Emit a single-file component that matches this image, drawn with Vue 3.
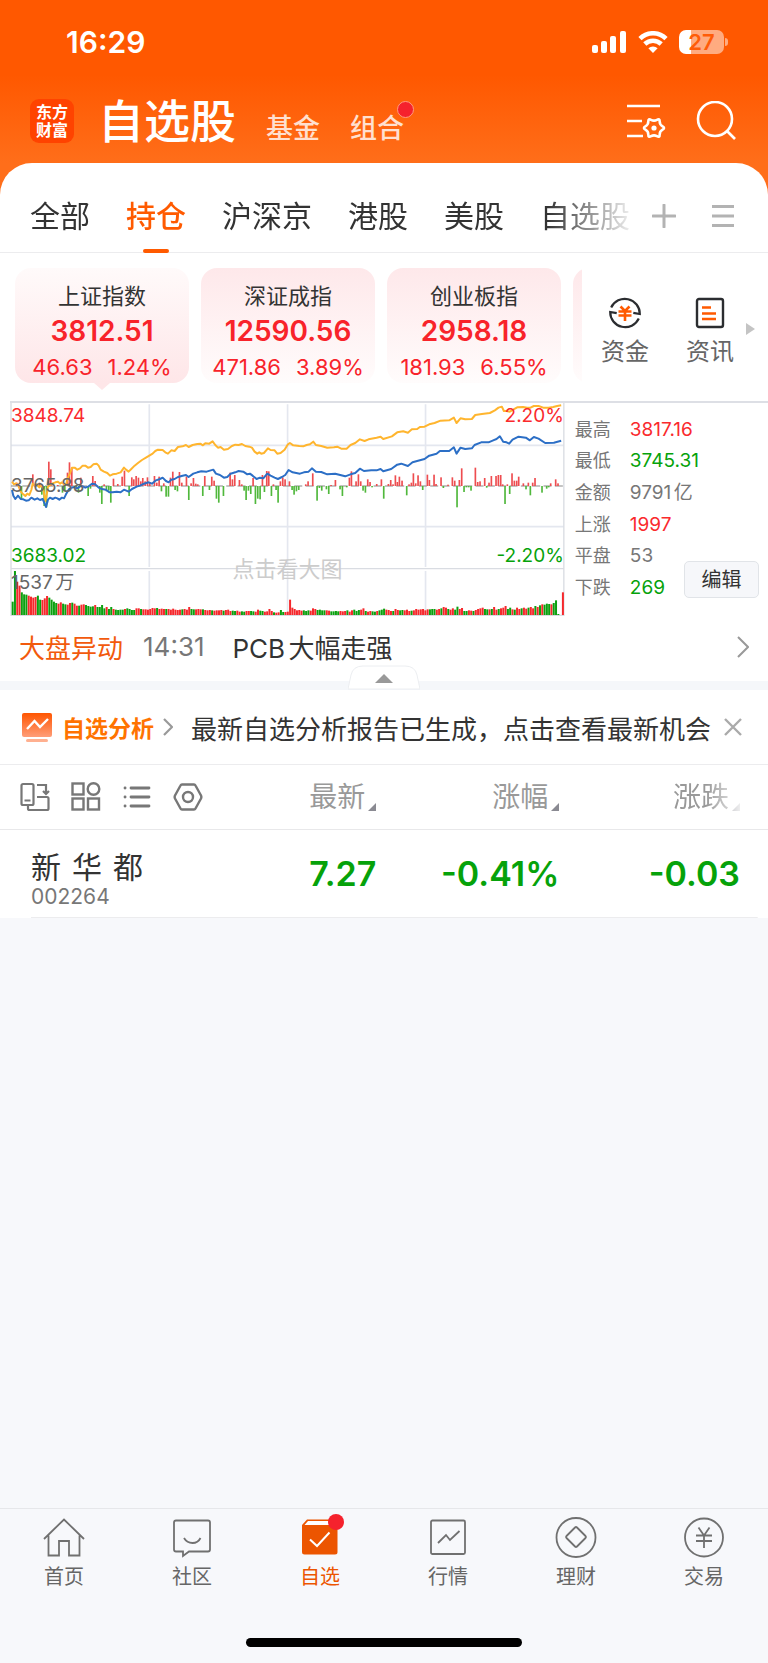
<script setup>
    import { ref, computed } from 'vue';

    const tabs = ['全部', '持仓', '沪深京', '港股', '美股', '自选股'];
    const activeTab = ref('持仓');

    const indexes = [
        { name: '上证指数', price: '3812.51', change: '46.63', percent: '1.24%' },
        { name: '深证成指', price: '12590.56', change: '471.86', percent: '3.89%' },
        { name: '创业板指', price: '2958.18', change: '181.93', percent: '6.55%' },
    ];
    const activeIndex = ref('上证指数');

    const stats = [
        { label: '最高', value: '3817.16', trend: 'up' },
        { label: '最低', value: '3745.31', trend: 'down' },
        { label: '金额', value: '9791亿', trend: 'flat' },
        { label: '上涨', value: '1997', trend: 'up' },
        { label: '平盘', value: '53', trend: 'flat' },
        { label: '下跌', value: '269', trend: 'down' },
    ];

    const columns = ['最新', '涨幅', '涨跌'];
    const stocks = [
        { name: '新 华 都', code: '002264', values: ['7.27', '-0.41%', '-0.03'] },
    ];

    const bannerVisible = ref(true);
    const activeNav = ref('自选');

    // minute chart, three units to a pixel
    const BASE = 273;
    const FLOOR = 660;
    const STEP = 6.88;

    const leadLine = '36,260 42,268 48,265 55,272 62,290 70,298 76,303 82,296 88,300 94,285 98,266 104,272 110,268 118,277 124,270 130,282 136,318 140,300 144,275 150,270 158,265 166,262 174,260 180,266 186,262 192,268 198,270 203,250 210,235 216,218 224,218 232,224 240,220 248,212 256,212 264,218 272,216 280,208 290,206 296,212 302,224 312,230 322,234 330,242 338,238 350,236 362,232 372,218 378,224 386,230 394,222 404,212 414,204 426,195 438,188 448,182 458,176 466,168 474,164 488,165 496,172 504,176 514,166 524,168 534,156 548,154 558,150 566,156 578,150 592,147 602,146 608,151 616,145 628,146 638,139 646,150 654,158 662,156 672,164 684,162 696,153 706,149 716,150 726,147 736,153 748,155 756,158 764,170 772,176 778,172 784,176 792,174 804,160 812,165 824,166 832,176 842,174 854,164 864,148 870,144 880,151 898,153 910,154 920,150 930,148 940,140 948,150 964,153 982,158 1002,157 1012,155 1024,161 1040,161 1052,150 1066,144 1080,133 1094,138 1106,133 1130,128 1142,125 1150,132 1176,124 1192,112 1210,109 1224,113 1236,103 1252,102 1260,96 1274,95 1288,88 1304,84 1322,77 1348,76 1362,68 1370,84 1382,70 1396,73 1416,72 1426,60 1446,57 1470,54 1485,46 1496,38 1506,35 1512,48 1520,48 1530,50 1540,44 1552,37 1570,36 1582,38 1592,38 1602,33 1616,33 1630,38 1646,38 1660,36 1672,33 1684,31';
    const indexLine = '36,285 40,302 46,312 54,302 62,312 70,313 78,317 86,316 94,308 104,314 112,310 120,315 128,312 134,326 138,336 144,314 150,308 158,312 166,308 172,310 178,314 186,308 192,310 198,298 206,284 214,278 224,276 232,280 240,274 248,274 256,278 266,274 276,266 286,268 296,278 306,282 318,284 328,292 338,292 350,290 362,292 372,284 386,290 396,282 410,275 420,272 432,266 446,262 456,266 468,256 480,252 488,248 498,258 506,262 514,254 524,252 534,246 548,242 558,240 566,246 580,236 592,232 604,229 620,230 640,224 648,236 660,240 672,248 682,246 692,236 706,232 716,228 730,230 742,238 750,236 758,242 770,252 780,248 790,250 802,236 812,242 824,248 834,252 846,246 856,240 866,225 878,232 900,236 912,232 926,230 936,220 948,230 964,231 982,238 1006,236 1036,244 1052,238 1066,234 1080,221 1092,228 1114,226 1130,226 1142,222 1150,229 1174,222 1192,209 1204,206 1224,213 1238,202 1260,196 1274,192 1288,182 1310,176 1320,168 1348,168 1362,157 1370,176 1382,158 1396,162 1416,160 1424,150 1444,142 1466,142 1480,136 1490,132 1500,124 1510,140 1520,142 1528,146 1538,134 1556,125 1578,128 1590,136 1602,126 1616,131 1636,144 1662,143 1684,137';

    // [x, height], positive is above the base line
    const momentum = [
        [50, 10], [64, -40], [98, 35], [118, 10], [125, -26], [132, -60], [139, -64], [146, 73], [152, 50],
        [173, 3], [187, -20], [194, -12], [202, 40], [208, 71], [215, 55], [228, -10], [235, -20], [242, 25],
        [264, -30], [271, -8], [278, 30], [285, 15], [299, -20], [305, -54], [312, 5], [319, -16], [326, -14],
        [332, -50], [340, 22], [353, 6], [366, 28], [373, 46], [387, -30], [395, 26], [401, 20], [408, 30],
        [415, 25], [422, 14], [428, 24], [435, 14], [442, 26], [449, 12], [463, 30], [470, 10], [477, 28],
        [484, -16], [491, 8], [498, -32], [505, -32], [511, 25], [518, 43], [525, -12], [532, -16], [538, 42],
        [545, 10], [559, 28], [566, -42], [573, 8], [580, 24], [587, 7], [593, 5], [608, -30], [614, 30],
        [628, -12], [635, 28], [642, 16], [649, -38], [656, -50], [670, -30], [690, 40], [697, 20], [704, 33],
        [718, 18], [725, 5], [732, -14], [738, -42], [745, -14], [752, -24], [759, 24], [766, -54], [773, -38],
        [780, -40], [787, 33], [793, -18], [800, 45], [806, 44], [814, -30], [820, 5], [828, -12], [834, -50],
        [841, 14], [848, 26], [855, 20], [868, 14], [876, -12], [882, -26], [889, -16], [896, -12], [917, 5],
        [924, 14], [938, 38], [951, -44], [958, -6], [965, -14], [979, -10], [986, -24], [993, 3], [1006, 18],
        [1020, -10], [1027, -30], [1040, -4], [1048, 25], [1054, 44], [1068, 14], [1075, 35], [1082, 14],
        [1089, -14], [1096, -20], [1103, 20], [1110, 12], [1116, -4], [1130, 6], [1144, 20], [1151, -38],
        [1165, 6], [1172, 18], [1179, 5], [1186, 32], [1192, 12], [1198, 28], [1206, 16], [1220, -28],
        [1227, 5], [1234, 10], [1240, 38], [1247, 8], [1254, 32], [1261, 14], [1268, -12], [1282, 34],
        [1288, 18], [1302, 34], [1308, 6], [1323, 26], [1330, -6], [1344, 4], [1357, 26], [1364, 16],
        [1371, -64], [1378, 18], [1385, 53], [1392, -18], [1399, -4], [1406, -4], [1413, -14], [1426, 55],
        [1433, 12], [1440, 14], [1454, 24], [1460, -5], [1467, 10], [1474, 30], [1488, 30], [1495, 33],
        [1502, 33], [1508, 5], [1515, -54], [1522, 5], [1529, -24], [1536, 38], [1543, 16], [1550, 16],
        [1556, 28], [1570, 8], [1578, -10], [1585, 10], [1591, -28], [1598, 10], [1605, 24], [1626, -20],
        [1640, -8], [1646, -4], [1652, 8], [1667, 20], [1674, 8],
    ];

    const volumes = [
        40, 132, 100, 88, 68, 62, 61, 58, 55, 52, 54, 58, 46, 45, 50, 57, 52, 46, 40, 36,
        34, 38, 34, 32, 31, 36, 37, 34, 28, 28, 31, 32, 30, 27, 25, 26, 30, 24, 24, 30,
        20, 24, 18, 24, 18, 16, 15, 16, 16, 18, 20, 18, 15, 15, 20, 20, 18, 17, 17, 16,
        18, 21, 20, 21, 18, 19, 18, 18, 18, 16, 19, 16, 15, 16, 17, 18, 16, 24, 18, 17,
        17, 18, 17, 17, 15, 14, 15, 14, 13, 14, 14, 15, 13, 15, 16, 12, 13, 12, 13, 10,
        11, 10, 12, 12, 12, 11, 10, 16, 13, 12, 10, 11, 18, 12, 8, 7, 8, 15, 9, 9,
        10, 46, 22, 18, 14, 15, 13, 14, 12, 14, 13, 20, 18, 15, 16, 14, 14, 14, 13, 11,
        11, 12, 11, 12, 11, 12, 14, 10, 14, 16, 12, 15, 16, 20, 12, 10, 12, 11, 10, 12,
        14, 16, 19, 16, 15, 12, 12, 18, 15, 14, 15, 14, 16, 12, 13, 14, 18, 16, 17, 18,
        14, 17, 17, 18, 18, 16, 18, 20, 24, 22, 18, 16, 20, 16, 25, 18, 21, 12, 12, 14,
        13, 12, 15, 18, 20, 22, 18, 17, 17, 18, 24, 16, 18, 20, 22, 27, 18, 22, 17, 16,
        22, 18, 20, 22, 19, 22, 24, 20, 27, 24, 29, 32, 31, 34, 33, 32, 36, 44, 3, 0, 68,
    ];
    const reds = '001100011110011100001100110110110000100001001000010000110111111011101111110111001110111011110111001100110011001111011001101111100011100001100001110110001101100100011101100111011111110001101101100110011011110010110111001011011011010100010001';

    const volumeBars = computed(() => volumes.map((height, i) => ({
        x: 35 + i * STEP,
        height,
        up: i === volumes.length - 1 || i === 121 || reds[i] === '1',
    })));
</script>

<template>
    <div class="page">
        <header class="top">
            <div class="status">
                <span class="clock">16:29</span>
                <div class="status-icons">
                    <svg width="35" height="22" viewBox="0 0 35 22" fill="#fff">
                        <rect x="0" y="14" width="6" height="8" rx="2" />
                        <rect x="9" y="10" width="6" height="12" rx="2" />
                        <rect x="18" y="5" width="6" height="17" rx="2" />
                        <rect x="28" y="0" width="6" height="22" rx="2" />
                    </svg>
                    <svg width="30" height="22" viewBox="0 0 30 22" fill="none" stroke="#fff" stroke-width="4.6">
                        <path d="M2 7.6a18.5 18.5 0 0 1 26 0" />
                        <path d="M6.8 13a12 12 0 0 1 16.4 0" />
                        <path d="M15 22l-4.6-4.7a6.6 6.6 0 0 1 9.2 0z" fill="#fff" stroke="none" />
                    </svg>
                    <div class="battery"><span>27</span></div>
                </div>
            </div>
            <div class="title-row">
                <div class="logo"><span>东方</span><span>财富</span></div>
                <nav class="sections">
                    <a href="#" class="section current">自选股</a>
                    <a href="#" class="section">基金</a>
                    <a href="#" class="section dotted">组合</a>
                </nav>
                <button aria-label="设置">
                    <svg width="40" height="40" viewBox="0 0 40 40" fill="none" stroke="#fff" stroke-width="2.6">
                        <path d="M1 5h33M1 20h15M1 35h16" />
                        <path d="M36.6 25.4Q39.5 27 36.6 28.6Q33.6 30.3 33.7 33.6Q33.8 37 30.9 35.2Q28 33.5 25.1 35.2Q22.2 37 22.3 33.6Q22.4 30.3 19.4 28.6Q16.5 27 19.4 25.4Q22.4 23.7 22.3 20.4Q22.2 17 25.1 18.8Q28 20.5 30.9 18.8Q33.8 17 33.7 20.4Q33.6 23.7 36.6 25.4Z" />
                        <circle cx="28" cy="27" r="2.6" fill="#fff" stroke="none" />
                    </svg>
                </button>
                <button aria-label="搜索">
                    <svg width="40" height="40" viewBox="0 0 40 40" fill="none" stroke="#fff" stroke-width="2.6">
                        <circle cx="19" cy="18" r="17" />
                        <path d="M31 30l8 8" />
                    </svg>
                </button>
            </div>
        </header>

        <main class="sheet">
            <div class="tab-bar">
                <div class="tabs">
                    <button
                        v-for="tab in tabs"
                        :key="tab"
                        class="tab"
                        :class="{ active: tab === activeTab }"
                        @click="activeTab = tab"
                    >{{ tab }}</button>
                </div>
                <button class="tab-tool" aria-label="添加">
                    <svg width="24" height="24" viewBox="0 0 24 24" stroke="#b3b3b3" stroke-width="3" stroke-linecap="round">
                        <path d="M12 1v22M1 12h22" />
                    </svg>
                </button>
                <button class="tab-tool" aria-label="菜单">
                    <svg width="24" height="24" viewBox="0 0 24 24" stroke="#b3b3b3" stroke-width="3">
                        <path d="M1 2.5h22M1 12h22M1 21.5h22" />
                    </svg>
                </button>
            </div>

            <div class="index-bar">
                <div class="cards">
                    <button
                        v-for="item in indexes"
                        :key="item.name"
                        class="card"
                        :class="{ picked: item.name === activeIndex }"
                        @click="activeIndex = item.name"
                    >
                        <span class="card-name">{{ item.name }}</span>
                        <span class="card-price">{{ item.price }}</span>
                        <span class="card-change"><span>{{ item.change }}</span><span>{{ item.percent }}</span></span>
                    </button>
                    <div class="card"></div>
                </div>
                <div class="shortcuts">
                    <a href="#" class="shortcut">
                        <svg width="34" height="34" viewBox="0 0 34 34" fill="none" stroke="#2b2d30" stroke-width="2.2">
                            <path d="M3.2 11.5A15 15 0 0 1 31.8 18l-6.5-1.2" />
                            <path d="M30.8 22.5A15 15 0 0 1 2.2 16l6.5 1.2" />
                            <path d="M12.5 10.5l4.5 4.5l4.5-4.5M10.5 15.5h13M10.5 19.5h13M17 15v10" stroke="#ff5a00" stroke-width="2.6" />
                        </svg>
                        <span>资金</span>
                    </a>
                    <a href="#" class="shortcut">
                        <svg width="34" height="34" viewBox="0 0 34 34" fill="none" stroke="#2b2d30" stroke-width="2.4">
                            <rect x="4" y="3" width="26" height="28" rx="2" />
                            <path d="M9 11.5h9M9 17.5h14M9 23h14" stroke="#ff5a00" stroke-width="2.6" />
                        </svg>
                        <span>资讯</span>
                    </a>
                </div>
                <svg width="9" height="12" viewBox="0 0 9 12" fill="#c4c4c4"><path d="M0 0l9 6l-9 6z" /></svg>
            </div>

            <section class="market">
                <div class="chart">
                    <svg viewBox="30 24 1665 639" preserveAspectRatio="none">
                        <g stroke="#e4e7ef" stroke-width="5" fill="none">
                            <path d="M33 151H1692M33 395H1692M448 28V516M863 28V516M1277 28V516M448 528V660M863 528V660M1277 528V660" />
                            <path d="M33 20V661H1692V20M33 521H1692" stroke="#d9dce2" stroke-width="4" />
                        </g>
                        <path :d="`M33 ${BASE}H1692`" stroke="#888" stroke-width="3" stroke-dasharray="24 10" />
                        <rect
                            v-for="[x, h] in momentum"
                            :key="x"
                            :x="x - 2"
                            :y="h > 0 ? BASE - h : BASE"
                            width="5"
                            :height="Math.abs(h)"
                            :fill="h > 0 ? '#ee4d50' : '#50b83c'"
                        />
                        <rect
                            v-for="bar in volumeBars"
                            :key="bar.x"
                            :x="bar.x"
                            :y="FLOOR - bar.height"
                            width="6"
                            :height="bar.height"
                            :fill="bar.up ? '#f5282c' : '#0ba00f'"
                        />
                        <polyline :points="leadLine" fill="none" stroke="#ffb52e" stroke-width="6" stroke-linejoin="round" />
                        <polyline :points="indexLine" fill="none" stroke="#2c6fc6" stroke-width="6" stroke-linejoin="round" />
                    </svg>
                    <span class="mark high up">3848.74</span>
                    <span class="mark high right up">2.20%</span>
                    <span class="mark mid">3765.88</span>
                    <span class="mark low down">3683.02</span>
                    <span class="mark low right down">-2.20%</span>
                    <span class="mark vol">1537万</span>
                    <span class="mark hint">点击看大图</span>
                </div>
                <dl class="stats">
                    <div v-for="stat in stats" :key="stat.label">
                        <dt>{{ stat.label }}</dt>
                        <dd :class="stat.trend">{{ stat.value }}</dd>
                    </div>
                </dl>
                <button class="edit">编辑</button>
            </section>

            <a href="#" class="news">
                <span class="news-tag">大盘异动</span>
                <time>14:31</time>
                <span class="news-text">PCB大幅走强</span>
                <svg width="12" height="22" viewBox="0 0 12 22" fill="none" stroke="#999" stroke-width="2"><path d="M1 1l10 10l-10 10" /></svg>
            </a>

            <div class="divider">
                <button class="fold" aria-label="收起">
                    <svg width="72" height="25" viewBox="0 0 72 25">
                        <path d="M0 24L3 10Q5 1 15 1H57Q67 1 69 10L72 24z" fill="#fff" stroke="#eceef1" />
                        <path d="M27 18l9-9l9 9z" fill="#999" />
                    </svg>
                </button>
            </div>

            <div v-if="bannerVisible" class="banner">
                <svg width="30" height="30" viewBox="0 0 30 30">
                    <defs>
                        <linearGradient id="screen" x2="0" y2="1">
                            <stop stop-color="#ff5500" />
                            <stop offset="1" stop-color="#ff9d78" />
                        </linearGradient>
                    </defs>
                    <rect y="1" width="30" height="24" rx="2" fill="url(#screen)" />
                    <rect x="4" y="27" width="22" height="3" rx="1.5" fill="#ffb090" />
                    <path d="M5 17l7.5-8l5.5 6l8-8" fill="none" stroke="#fff" stroke-width="2.4" />
                </svg>
                <a href="#" class="banner-tag">自选分析</a>
                <svg width="10" height="18" viewBox="0 0 10 18" fill="none" stroke="#999" stroke-width="2.2"><path d="M1 1l8 8l-8 8" /></svg>
                <a href="#" class="banner-text">最新自选分析报告已生成，点击查看最新机会</a>
                <button aria-label="关闭" @click="bannerVisible = false">
                    <svg width="18" height="18" viewBox="0 0 18 18" stroke="#aaa" stroke-width="2.4"><path d="M1 1l16 16M17 1l-16 16" /></svg>
                </button>
            </div>

            <table class="stocks">
                <thead>
                    <tr>
                        <th>
                            <div class="tools">
                                <button aria-label="横屏">
                                    <svg width="30" height="30" viewBox="0 0 30 30" fill="none" stroke="#777" stroke-width="2.2">
                                        <rect x="1.5" y="2" width="12" height="21" rx="1.5" />
                                        <path d="M4.5 18.5h6M17 3h9v8M23 9l3 3l3-3M17 15h10q1.5 0 1.5 1.5v10q0 1.5-1.5 1.5H9.5q-1.5 0-1.5-1.5V24" />
                                    </svg>
                                </button>
                                <button aria-label="宫格">
                                    <svg width="30" height="30" viewBox="0 0 30 30" fill="none" stroke="#777" stroke-width="2.4">
                                        <rect x="1.5" y="1.5" width="11" height="11" />
                                        <circle cx="22.5" cy="7" r="5.8" />
                                        <rect x="1.5" y="16.5" width="11" height="11" />
                                        <rect x="17" y="16.5" width="11" height="11" />
                                    </svg>
                                </button>
                                <button aria-label="列表">
                                    <svg width="30" height="30" viewBox="0 0 30 30" fill="none" stroke="#777" stroke-width="2.8" stroke-linecap="round">
                                        <path d="M9 6h18M9 15h18M9 24h18M3 6h.1M3 15h.1M3 24h.1" />
                                    </svg>
                                </button>
                                <button aria-label="设置">
                                    <svg width="30" height="30" viewBox="0 0 30 30" fill="none" stroke="#777" stroke-width="2.4" stroke-linejoin="round">
                                        <path d="M9 2.5h12q1 0 1.5 1l5.5 10q.7 1.5 0 3l-5.500 10q-.5 1-1.5 1H9q-1 0-1.5-1L2 16.5q-.7-1.5 0-3l5.5-10q.5-1 1.5-1z" />
                                        <circle cx="15" cy="15" r="5" />
                                    </svg>
                                </button>
                            </div>
                        </th>
                        <th v-for="column in columns" :key="column">
                            <button class="sort">
                                {{ column }}<svg width="8" height="8" viewBox="0 0 8 8" fill="#8a8a92"><path d="M8 0v8H0z" /></svg>
                            </button>
                        </th>
                    </tr>
                </thead>
                <tbody>
                    <tr v-for="stock in stocks" :key="stock.code">
                        <td>
                            <div class="stock-name">{{ stock.name }}</div>
                            <div class="stock-code">{{ stock.code }}</div>
                        </td>
                        <td v-for="value in stock.values" :key="value" class="number">{{ value }}</td>
                    </tr>
                </tbody>
            </table>
        </main>

        <footer class="bottom">
            <nav class="nav">
                <a href="#" class="nav-item" :class="{ active: activeNav === '首页' }" @click.prevent="activeNav = '首页'">
                    <svg width="44" height="44" viewBox="0 0 44 44"><path d="M2 23L22 3.5L42 23M6.5 19.5V39.5H17V25H27V39.5H37.5V19.5" /></svg>
                    <span>首页</span>
                </a>
                <a href="#" class="nav-item" :class="{ active: activeNav === '社区' }" @click.prevent="activeNav = '社区'">
                    <svg width="44" height="44" viewBox="0 0 44 44">
                        <path d="M6 4.5h32q2 0 2 2v27q0 2-2 2H19l-6 4.500V35.5H6q-2 0-2-2V6.5q0-2 2-2z" />
                        <path d="M14 22q3 5 8.5 5t8-5" />
                    </svg>
                    <span>社区</span>
                </a>
                <a href="#" class="nav-item badge" :class="{ active: activeNav === '自选' }" @click.prevent="activeNav = '自选'">
                    <svg width="44" height="44" viewBox="0 0 44 44">
                        <path d="M9 3.5H37.5L39.5 9V36q0 2.5-2.5 2.5H6.5Q4 38.5 4 36V9z" fill="#ec5500" stroke="none" />
                        <path d="M10 5h26v4H6.5z" fill="#fff" stroke="none" />
                        <path d="M12 23.5l7 6.5l12.5-13.500" stroke="#fff" stroke-width="2" />
                    </svg>
                    <span>自选</span>
                </a>
                <a href="#" class="nav-item" :class="{ active: activeNav === '行情' }" @click.prevent="activeNav = '行情'">
                    <svg width="44" height="44" viewBox="0 0 44 44">
                        <rect x="5" y="4.5" width="34" height="33.5" rx="1.5" />
                        <path d="M12 27l8-8l4 5l9.5-9" />
                    </svg>
                    <span>行情</span>
                </a>
                <a href="#" class="nav-item" :class="{ active: activeNav === '理财' }" @click.prevent="activeNav = '理财'">
                    <svg width="44" height="44" viewBox="0 0 44 44">
                        <circle cx="22" cy="21.5" r="19.5" />
                        <path d="M21 11.5q1-1 2 0l8.5 8.5q1 1 0 2L23 30.5q-1 1-2 0L12.5 22q-1-1 0-2z" />
                    </svg>
                    <span>理财</span>
                </a>
                <a href="#" class="nav-item" :class="{ active: activeNav === '交易' }" @click.prevent="activeNav = '交易'">
                    <svg width="44" height="44" viewBox="0 0 44 44">
                        <circle cx="22" cy="21.5" r="19" />
                        <path d="M16.5 11.5l5.5 8l5.5-8M14 19.5h16M14 25h16M22 19.5V32" />
                    </svg>
                    <span>交易</span>
                </a>
            </nav>
            <div class="home-bar"></div>
        </footer>
    </div>
</template>

<style>
    body{
        background: #f7f8fb;
    }
</style>

<style scoped>
    .page{
        min-height: 100vh;
        display: flex;
        flex-direction: column;
        font-family: Inter, "Noto Sans CJK SC", sans-serif;
        text-autospace: normal;
        color: #333;
    }
    .page *{
        box-sizing: border-box;
    }
    button{
        padding: 0;
        border: 0;
        background: none;
        font: inherit;
        color: inherit;
        cursor: pointer;
    }
    a{
        color: inherit;
        text-decoration: none;
    }
    svg{
        display: block;
        flex-shrink: 0;
    }
    .up{
        color: #fa2a2d;
    }
    .down{
        color: #06a20a;
    }
    .flat{
        color: #777;
    }

    .top{
        padding-bottom: 37px;
        background: linear-gradient(#ff5800 75px, #ff6e1a 163px);
        color: #fff;
    }
    .status{
        height: 84px;
        padding: 0 40px 0 66px;
        display: flex;
        justify-content: space-between;
        align-items: center;
    }
    .clock{
        font-size: 30px;
        font-weight: 600;
    }
    .status-icons{
        display: flex;
        align-items: center;
        gap: 11px;
    }
    .battery{
        position: relative;
        width: 45px;
        height: 24px;
        border-radius: 7px;
        margin-right: 4px;
        background: linear-gradient(90deg, #fff 12px, #ffab80 12px);
        color: #ff5c08;
        font-size: 22px;
        font-weight: 600;
        line-height: 24px;
        text-align: center;
    }
    .battery::after{
        content: "";
        position: absolute;
        right: -4px;
        top: 8px;
        width: 3px;
        height: 8px;
        border-radius: 0 3px 3px 0;
        background: #ffab80;
    }
    .title-row{
        height: 74px;
        margin-bottom: 5px;
        padding: 0 32px 0 30px;
        display: flex;
        align-items: center;
        gap: 30px;
    }
    .logo{
        width: 44px;
        height: 44px;
        border-radius: 9px;
        background: #ff4300;
        display: flex;
        flex-direction: column;
        align-items: center;
        justify-content: center;
        font-size: 16px;
        font-weight: 700;
        line-height: 18px;
    }
    .sections{
        flex: 1;
        display: flex;
        align-items: baseline;
        gap: 30px;
        margin-left: -6px;
        padding-top: 8px;
        line-height: 60px;
    }
    .section{
        position: relative;
        font-size: 27px;
        font-weight: 500;
        color: #ffe0d0;
    }
    .section.current{
        font-size: 46px;
        color: #fff;
    }
    .dotted::after{
        content: "";
        position: absolute;
        right: -10px;
        top: 2px;
        width: 15px;
        height: 15px;
        border: 1px solid #ff9a80;
        border-radius: 50%;
        background: #f5222d;
    }

    .sheet{
        margin-top: -37px;
        border-radius: 32px 32px 0 0;
        background: #fff;
    }
    .tab-bar{
        height: 90px;
        padding: 0 33px 0 30px;
        border-bottom: 1px solid #ececee;
        display: flex;
        align-items: center;
    }
    .tabs{
        flex: 1;
        height: 90px;
        display: flex;
        gap: 36px;
        overflow: hidden;
        mask-image: linear-gradient(90deg, #000 86%, transparent 101%);
    }
    .tab{
        position: relative;
        flex-shrink: 0;
        padding-bottom: 4px;
        padding-top: 16px;
        font-size: 30px;
    }
    .tab.active{
        font-weight: 500;
        color: #ff5a00;
    }
    .tab.active::after{
        content: "";
        position: absolute;
        left: 50%;
        bottom: 0;
        width: 26px;
        height: 4px;
        margin-left: -13px;
        border-radius: 2px;
        background: #ff5a00;
    }
    .tab-tool{
        margin: 16px 0 0 20px;
    }
    .tab-tool + .tab-tool{
        margin-left: 35px;
    }

    .index-bar{
        display: flex;
        align-items: center;
        padding: 15px 13px 11px 15px;
    }
    .cards{
        flex: 1;
        display: flex;
        gap: 12px;
        height: 122px;
        overflow: hidden;
    }
    .card{
        position: relative;
        flex: 0 0 174px;
        height: 115px;
        padding-top: 11px;
        border-radius: 16px;
        background: linear-gradient(#fee8ea, #fffcfc);
        display: flex;
        flex-direction: column;
        align-items: center;
        justify-content: center;
        color: #f8232a;
    }
    .card.picked{
        background: linear-gradient(#fffafa, #fee6e8);
    }
    .card.picked::after{
        content: "";
        position: absolute;
        top: 115px;
        left: 79px;
        border: 8px solid transparent;
        border-top: 7px solid #fee6e8;
        border-bottom: 0;
    }
    .card-name{
        font-size: 22px;
        line-height: 34px;
        color: #333;
    }
    .card-price{
        font-size: 28px;
        font-weight: 600;
        line-height: 37px;
    }
    .card-change{
        display: flex;
        gap: 15px;
        font-size: 22px;
        line-height: 34px;
    }
    .shortcuts{
        display: flex;
        gap: 37px;
        padding: 7px 12px 0 19px;
    }
    .shortcut{
        display: flex;
        flex-direction: column;
        align-items: center;
        gap: 4px;
        font-size: 24px;
        line-height: 36px;
        color: #666;
    }

    .market{
        position: relative;
        margin-left: 10px;
        border-top: 2px solid #dddfe5;
        display: flex;
    }
    .chart{
        position: relative;
        flex: 0 0 73.2%;
        height: 213px;
    }
    .chart svg{
        width: 100%;
        height: 213px;
    }
    .mark{
        position: absolute;
        left: 1px;
        font-size: 19px;
        line-height: 24px;
    }
    .mark.right{
        left: auto;
        right: 1px;
    }
    .high{
        top: 1px;
    }
    .mid{
        top: 71px;
        color: #666;
    }
    .low{
        top: 141px;
    }
    .vol{
        top: 168px;
        color: #666;
    }
    .hint{
        left: 0;
        right: 0;
        top: 154px;
        font-size: 22px;
        text-align: center;
        color: #ccc;
    }
    .stats{
        flex: 1;
        margin: 0;
        padding: 11px 0 12px 10px;
        display: grid;
        grid-template-rows: repeat(6, 1fr);
        font-size: 18px;
    }
    .stats div{
        display: flex;
        align-items: center;
        gap: 19px;
        line-height: 24px;
    }
    .stats dt{
        color: #777;
    }
    .stats dd{
        margin: 0;
        font-size: 19px;
    }
    .edit{
        position: absolute;
        right: 9px;
        bottom: 18px;
        width: 75px;
        height: 37px;
        border: 1px solid #e1e4e8;
        border-radius: 5px;
        background: #f6f7fa;
        font-size: 20px;
        line-height: 32px;
    }

    .news{
        height: 65px;
        padding: 0 19px 4px;
        display: flex;
        align-items: center;
        font-size: 26px;
        color: #777;
    }
    .news-tag{
        color: #f25a0c;
    }
    .news time{
        margin: 0 28px 0 20px;
    }
    .news-text{
        flex: 1;
        color: #333;
    }
    .divider{
        position: relative;
        height: 9px;
        background: #f5f7fa;
    }
    .fold{
        position: absolute;
        left: 50%;
        bottom: 0;
        margin-left: -36px;
    }

    .banner{
        height: 75px;
        padding: 0 26px 0 22px;
        border-bottom: 1px solid #ececee;
        display: flex;
        align-items: center;
    }
    .banner-tag{
        margin: 0 9px 0 10px;
        font-size: 23px;
        font-weight: 700;
        color: #ff7300;
    }
    .banner-text{
        flex: 1;
        margin-left: 18px;
        font-size: 26px;
        white-space: nowrap;
    }

    .stocks{
        width: 100%;
        table-layout: fixed;
        border-collapse: collapse;
    }
    .stocks th{
        height: 64px;
        padding: 0;
        border-bottom: 1px solid #e8e8ea;
        font-weight: 400;
        text-align: right;
    }
    .stocks th:nth-child(1){
        width: 28%;
    }
    .stocks th:nth-child(2){
        width: 21%;
    }
    .stocks th:nth-child(3){
        width: 183px;
    }
    .stocks th:last-child,
    .stocks td:last-child{
        padding-right: 28px;
    }
    .tools{
        display: flex;
        gap: 21px;
        padding-left: 20px;
    }
    .sort{
        display: inline-flex;
        align-items: center;
        gap: 3px;
        font-size: 28px;
        line-height: 40px;
        color: #999;
    }
    .sort svg{
        margin-top: 20px;
    }
    th:last-child .sort{
        mask-image: linear-gradient(90deg, #000 50%, rgba(0, 0, 0, .15));
    }
    .stocks td{
        height: 89px;
        padding: 0;
        text-align: right;
    }
    .stocks td:first-child{
        padding: 11px 0 0 31px;
        text-align: left;
    }
    .stocks tbody tr{
        background: linear-gradient(#ececee, #ececee) 31px 100% / calc(100% - 41px) 1px no-repeat;
    }
    .stock-name{
        width: 112px;
        font-size: 30px;
        line-height: 36px;
        text-align-last: justify;
    }
    .stock-code{
        font-size: 21px;
        line-height: 24px;
        color: #777;
    }
    .stocks .number{
        font-size: 34px;
        font-weight: 600;
        color: #06a20a;
    }

    .bottom{
        height: 155px;
        margin-top: auto;
        border-top: 1px solid #e6e7ea;
        display: flex;
        flex-direction: column;
        align-items: center;
        justify-content: space-between;
        padding: 7px 0 16px;
    }
    .nav{
        width: 100%;
        display: flex;
    }
    .nav-item{
        position: relative;
        flex: 1;
        display: flex;
        flex-direction: column;
        align-items: center;
        font-size: 20px;
        line-height: 34px;
        color: #666;
    }
    .nav-item svg{
        fill: none;
        stroke: #707070;
        stroke-width: 1.8;
    }
    .nav-item.active{
        color: #ec5500;
    }
    .badge::after{
        content: "";
        position: absolute;
        left: 50%;
        top: -2px;
        width: 16px;
        height: 16px;
        margin-left: 8px;
        border-radius: 50%;
        background: #f5222d;
    }
    .home-bar{
        width: 36%;
        height: 9px;
        border-radius: 5px;
        background: #000;
    }
</style>
